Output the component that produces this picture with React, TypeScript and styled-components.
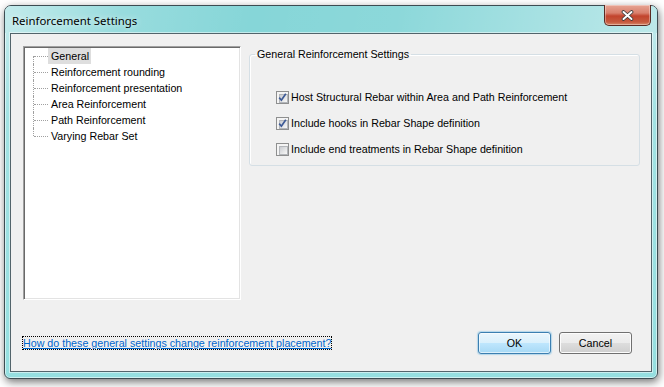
import React from 'react'
import styled, { createGlobalStyle } from 'styled-components'

const GlobalStyle = createGlobalStyle`
  html, body {
    margin: 0;
    padding: 0;
    background: #ffffff;
  }
  body {
    font-family: "Liberation Sans", Arial, sans-serif;
    font-size: 10.7px;
    color: #000;
  }
`

const Page = styled.div`
  width: 664px;
  height: 387px;
  box-sizing: border-box;
  padding: 5px 0 0 4px;
  background: #ffffff;
  overflow: hidden;
`

const Window = styled.div`
  width: 654px;
  height: 374px;
  box-sizing: border-box;
  display: flex;
  flex-direction: column;
  padding: 0 5px 6px 5px;
  border: 1px solid #3d4c52;
  border-radius: 7px 7px 6px 6px;
  background: linear-gradient(180deg, #c6ecee 0%, #a2e2e3 30%, #95dfe0 100%);
  box-shadow: 1px 3px 9px rgba(0, 0, 0, 0.55), inset 0 0 0 1px rgba(255, 255, 255, 0.55);
`

const TitleBar = styled.div`
  height: 27px;
  display: flex;
  align-items: flex-start;
  justify-content: space-between;
  margin: 0 -5px;
  padding: 0 6px 0 7px;
  border-radius: 6px 6px 0 0;
  background:
    linear-gradient(100deg,
      rgba(255, 255, 255, 0.5) 0%,
      rgba(255, 255, 255, 0.15) 18%,
      rgba(255, 255, 255, 0) 38%,
      rgba(255, 255, 255, 0.05) 60%,
      rgba(255, 255, 255, 0.25) 80%,
      rgba(255, 255, 255, 0.45) 100%),
    #86d6d8;
`

const Title = styled.span`
  margin-top: 7px;
  font-family: "Noto Sans", "Liberation Sans", sans-serif;
  font-size: 11.4px;
  line-height: 15px;
  color: #000;
  text-shadow: 0 0 6px rgba(255, 255, 255, 0.9);
`

const CloseButton = styled.div`
  width: 47px;
  height: 21px;
  margin-top: -1px;
  box-sizing: border-box;
  display: flex;
  align-items: center;
  justify-content: center;
  border: 1px solid #5a2a22;
  border-top: none;
  border-radius: 0 0 5px 5px;
  background: linear-gradient(180deg, #e7a594 0%, #d9806d 40%, #c2442d 55%, #c65a3e 85%, #d88a6a 100%);
  box-shadow: inset 0 0 0 1px rgba(255, 255, 255, 0.35);
`

const Client = styled.div`
  flex: 1;
  display: flex;
  flex-direction: column;
  padding: 12px 11px 17px 12px;
  background: #f0f0f0;
  border: 1px solid #52646b;
  box-shadow: 0 0 0 1px rgba(255, 255, 255, 0.5);
`

const TopRow = styled.div`
  display: flex;
  gap: 8px;
`

const Tree = styled.ul`
  width: 218px;
  height: 254px;
  box-sizing: border-box;
  margin: 0;
  padding: 1px 0 0 1px;
  list-style: none;
  background: #ffffff;
  border: 1px solid;
  border-color: #a0a0a0 #ffffff #ffffff #a0a0a0;
  box-shadow: inset 1px 1px 0 #696969, inset -1px -1px 0 #e3e3e3;
`

const TreeRow = styled.li`
  position: relative;
  height: 16px;
  display: flex;
  align-items: center;
  padding-left: 23px;

  &::before {
    content: "";
    position: absolute;
    left: 8px;
    top: 0;
    bottom: 0;
    border-left: 1px dotted #a0a0a0;
  }
  &:first-child::before {
    top: 8px;
  }
  &:last-child::before {
    bottom: 8px;
  }
  &::after {
    content: "";
    position: absolute;
    left: 9px;
    top: 8px;
    width: 14px;
    border-top: 1px dotted #a0a0a0;
  }
`

const TreeLabel = styled.span<{ $selected?: boolean }>`
  padding: 0 2px 0 3px;
  line-height: 16px;
  white-space: nowrap;
  background: ${({ $selected }) => ($selected ? '#dedede' : 'transparent')};
`

const RightPane = styled.div`
  flex: 1;
  padding-top: 2px;
`

const Group = styled.fieldset`
  margin: 0;
  padding: 0;
  border: 1px solid #d5dfe5;
  border-radius: 3px;
  box-shadow: inset 1px 1px 0 #ffffff;
`

const Legend = styled.legend`
  margin-left: 5px;
  padding: 0 2px;
  line-height: 13px;
`

const GroupBody = styled.div`
  display: flex;
  flex-direction: column;
  gap: 10px;
  padding: 28px 0 8px 26px;
`

const CheckRow = styled.label`
  display: flex;
  align-items: center;
  gap: 2px;
  height: 16px;
  white-space: nowrap;
`

const CheckBox = styled.span`
  position: relative;
  width: 13px;
  height: 13px;
  box-sizing: border-box;
  padding: 2px;
  border: 1px solid #8e8f8f;
  background: #f4f4f4;
  flex-shrink: 0;
`

const CheckInner = styled.span`
  display: block;
  width: 7px;
  height: 7px;
  border: 1px solid #b3b6ba;
  background: linear-gradient(135deg, #c9ccd1 0%, #e6e7e8 60%, #f8f8f8 100%);
`

const CheckMark = styled.svg`
  position: absolute;
  left: 0;
  top: 0;
`

const BottomRow = styled.div`
  margin-top: auto;
  display: flex;
  align-items: center;
  justify-content: space-between;
  padding-right: 8px;
`

const HelpLink = styled.a`
  color: #0066cc;
  text-decoration: underline;
  line-height: 12px;
  outline: 1px dotted #000;
  outline-offset: 0;
  cursor: pointer;
`

const Buttons = styled.div`
  display: flex;
  gap: 8px;
`

const Button = styled.button<{ $default?: boolean }>`
  width: 73px;
  height: 22px;
  padding: 0;
  font-family: "Liberation Sans", Arial, sans-serif;
  font-size: 10.7px;
  color: #000;
  border-radius: 3px;
  border: 1px solid ${({ $default }) => ($default ? '#3c7fb1' : '#707070')};
  background: ${({ $default }) =>
    $default
      ? 'linear-gradient(180deg, #eaf6fd 0%, #d9f0fc 50%, #bee6fd 51%, #a7d9f5 100%)'
      : 'linear-gradient(180deg, #f2f2f2 0%, #ebebeb 50%, #dddddd 51%, #cfcfcf 100%)'};
  box-shadow: inset 0 0 0 1px ${({ $default }) => ($default ? 'rgba(255,255,255,0.6)' : '#fcfcfc')}
    ${({ $default }) => ($default ? ', 0 0 1px 1px rgba(120, 190, 230, 0.5)' : '')};
`

const treeItems = [
  'General',
  'Reinforcement rounding',
  'Reinforcement presentation',
  'Area Reinforcement',
  'Path Reinforcement',
  'Varying Rebar Set',
]

const options = [
  { label: 'Host Structural Rebar within Area and Path Reinforcement', checked: true },
  { label: 'Include hooks in Rebar Shape definition', checked: true },
  { label: 'Include end treatments in Rebar Shape definition', checked: false },
]

const Check = ({ checked }: { checked: boolean }) => (
  <CheckBox>
    <CheckInner />
    {checked && (
      <CheckMark width="11" height="11" viewBox="0 0 11 11">
        <path d="M2.2 5.6 L4.4 8.2 L8.8 1.8" fill="none" stroke="#3d5a96" strokeWidth="1.7" />
      </CheckMark>
    )}
  </CheckBox>
)

const App = () => (
  <Page>
    <GlobalStyle />
    <Window>
      <TitleBar>
        <Title>Reinforcement Settings</Title>
        <CloseButton>
          <svg width="13" height="11" viewBox="0 0 13 11">
            <path d="M2.5 2 L10.5 9 M10.5 2 L2.5 9" stroke="#3a3a3a" strokeWidth="3.6" strokeLinecap="round" />
            <path d="M2.5 2 L10.5 9 M10.5 2 L2.5 9" stroke="#ffffff" strokeWidth="2" strokeLinecap="round" />
          </svg>
        </CloseButton>
      </TitleBar>
      <Client>
        <TopRow>
          <Tree>
            {treeItems.map((item, i) => (
              <TreeRow key={item}>
                <TreeLabel $selected={i === 0}>{item}</TreeLabel>
              </TreeRow>
            ))}
          </Tree>
          <RightPane>
            <Group>
              <Legend>General Reinforcement Settings</Legend>
              <GroupBody>
                {options.map((o) => (
                  <CheckRow key={o.label}>
                    <Check checked={o.checked} />
                    {o.label}
                  </CheckRow>
                ))}
              </GroupBody>
            </Group>
          </RightPane>
        </TopRow>
        <BottomRow>
          <HelpLink>How do these general settings change reinforcement placement?</HelpLink>
          <Buttons>
            <Button $default>OK</Button>
            <Button>Cancel</Button>
          </Buttons>
        </BottomRow>
      </Client>
    </Window>
  </Page>
)

export default App
